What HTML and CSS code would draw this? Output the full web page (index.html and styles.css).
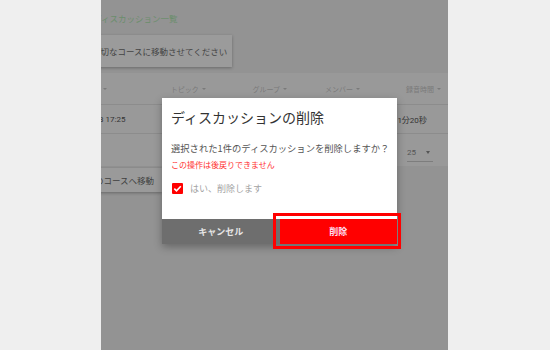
FILE: index.html
```html
<!DOCTYPE html>
<html lang="ja">
<head>
<meta charset="utf-8">
<title>ディスカッションの削除</title>
<link rel="stylesheet" href="styles.css">
</head>
<body>
<div class="panel">
  <div class="crumb">ディスカッション一覧</div>
  <div class="notice">適切なコースに移動させてください</div>
  <div class="table">
    <div class="thead">
      <div class="c c1 h1">作成日時<i class="caret"></i></div>
      <div class="c c2">トピック<i class="caret"></i></div>
      <div class="c c3">グループ<i class="caret"></i></div>
      <div class="c c4">メンバー<i class="caret"></i></div>
      <div class="c c5">録音時間<i class="caret"></i></div>
    </div>
    <div class="trow">
      <div class="c c1 d1">2018/07/03 17:25</div>
      <div class="c c2"></div>
      <div class="c c3"></div>
      <div class="c c4 d4"></div>
      <div class="c c5 d5">1分20秒</div>
    </div>
    <div class="pager">
      <div class="select"><span>25</span><i class="caret dark"></i></div>
    </div>
  </div>
  <div class="move">別のコースへ移動</div>

  <div class="dialog">
    <div class="dbody">
      <h1 class="dtitle">ディスカッションの削除</h1>
      <p class="dmsg">選択された1件のディスカッションを削除しますか？</p>
      <p class="dwarn">この操作は後戻りできません</p>
      <label class="dcheck">
        <span class="box"><svg viewBox="0 0 11 11" width="11" height="11"><path d="M2.3 5.6 L4.5 7.8 L8.8 3.3" fill="none" stroke="#fff" stroke-width="1.6"/></svg></span>
        <span class="clabel">はい、削除します</span>
      </label>
    </div>
    <div class="dactions">
      <div class="btn cancel">キャンセル</div>
      <div class="btn delete">削除</div>
    </div>
  </div>
  <div class="mark"></div>
</div>
</body>
</html>
```

FILE: styles.css
```css
* { box-sizing: border-box; }
html, body { margin: 0; padding: 0; }
body {
  background: #efefef;
  width: 550px;
  height: 350px;
  overflow: hidden;
  font-family: "Noto Sans CJK JP", "Noto Sans", sans-serif;
}
.panel {
  position: relative;
  margin-left: 101px;
  width: 347px;
  height: 350px;
  background: #939393;
  overflow: hidden;
  padding-top: 12px;
}
.crumb {
  margin-left: -8px;
  font-size: 8.5px;
  line-height: 12px;
  color: #6b8e6c;
  white-space: nowrap;
}
.notice {
  margin-top: 11px;
  margin-left: -20px;
  width: 151px;
  height: 32px;
  line-height: 32px;
  padding-left: 11px;
  font-size: 8.5px;
  color: #444;
  background: #9b9b9b;
  box-shadow: 0 1px 3px rgba(0,0,0,0.28);
  white-space: nowrap;
}
.table {
  margin-top: 6px;
  margin-left: -60px;
  width: 460px;
  background: #999;
}
.thead, .trow {
  display: flex;
  align-items: center;
  border-bottom: 1px solid #8c8c8c;
}
.thead { height: 32px; font-size: 7px; color: #7a7a7a; }
.trow { height: 29px; font-size: 8px; color: #333; font-family: Roboto, "Noto Sans CJK JP", sans-serif; }
.c { white-space: nowrap; display: flex; align-items: center; }
.c1 { width: 129.8px; }
.c2 { width: 81.7px; }
.c3 { width: 72.5px; }
.c4 { width: 81px; }
.c5 { flex: 1; }
.h1 { padding-left: 31px; }
.d1 { padding-left: 20px; }
.d4 { width: 72.4px; }
.caret {
  display: inline-block;
  margin-left: 3px;
  width: 0; height: 0;
  border-left: 2.2px solid transparent;
  border-right: 2.2px solid transparent;
  border-top: 2.6px solid #7a7a7a;
}
.caret.dark { border-top-color: #555; margin-left: 0; border-left-width: 2.6px; border-right-width: 2.6px; border-top-width: 3px; }
.pager {
  height: 32px;
  display: flex;
  align-items: center;
  padding-left: 366px;
}
.select {
  width: 25.5px;
  height: 18px;
  display: flex;
  align-items: center;
  justify-content: space-between;
  padding-right: 3px;
  margin-top: 5px;
  border-bottom: 1px solid #7d7d7d;
  font-family: Roboto, sans-serif;
  font-size: 8px;
  color: #555;
}
.move {
  margin-top: 2px;
  margin-left: -24px;
  width: 85px;
  height: 24px;
  line-height: 24px;
  text-align: right;
  padding-right: 8px;
  font-size: 8.5px;
  color: #3f3f3f;
  background: #9a9a9a;
  box-shadow: 0 1px 3px rgba(0,0,0,0.3);
  white-space: nowrap;
}
.dialog {
  position: absolute;
  left: 61px;
  top: 98px;
  width: 235px;
  height: 146px;
  display: flex;
  flex-direction: column;
  background: #fff;
  box-shadow: 0 3px 8px rgba(0,0,0,0.3);
}
.dbody {
  flex: 1;
  padding: 9px 9px 0 9px;
}
.dtitle {
  margin: 0;
  font-size: 14px;
  font-weight: normal;
  line-height: 20px;
  color: #333;
  white-space: nowrap;
}
.dmsg {
  margin: 13px 0 0 0;
  font-size: 9.3px;
  line-height: 16px;
  color: #555;
  white-space: nowrap;
}
.dwarn {
  margin: 0;
  font-size: 8px;
  line-height: 17px;
  color: #ff3030;
  white-space: nowrap;
}
.dcheck {
  margin-top: 8px;
  height: 14px;
  display: flex;
  align-items: center;
  padding-left: 1px;
}
.box {
  width: 11px;
  height: 11px;
  background: #f00;
  border-radius: 1px;
  display: flex;
}
.clabel {
  margin-left: 7px;
  font-size: 9px;
  color: #a3a3a3;
}
.dactions {
  height: 25px;
  display: flex;
}
.btn {
  flex: 1;
  display: flex;
  align-items: center;
  justify-content: center;
  font-size: 9px;
  font-weight: bold;
}
.cancel { background: #6e6e6e; color: #e6e6e6; }
.delete { background: #f00; color: #fde; }
.mark {
  position: absolute;
  left: 172px;
  top: 213px;
  width: 128px;
  height: 36px;
  border: 3px solid #f00;
}
```
